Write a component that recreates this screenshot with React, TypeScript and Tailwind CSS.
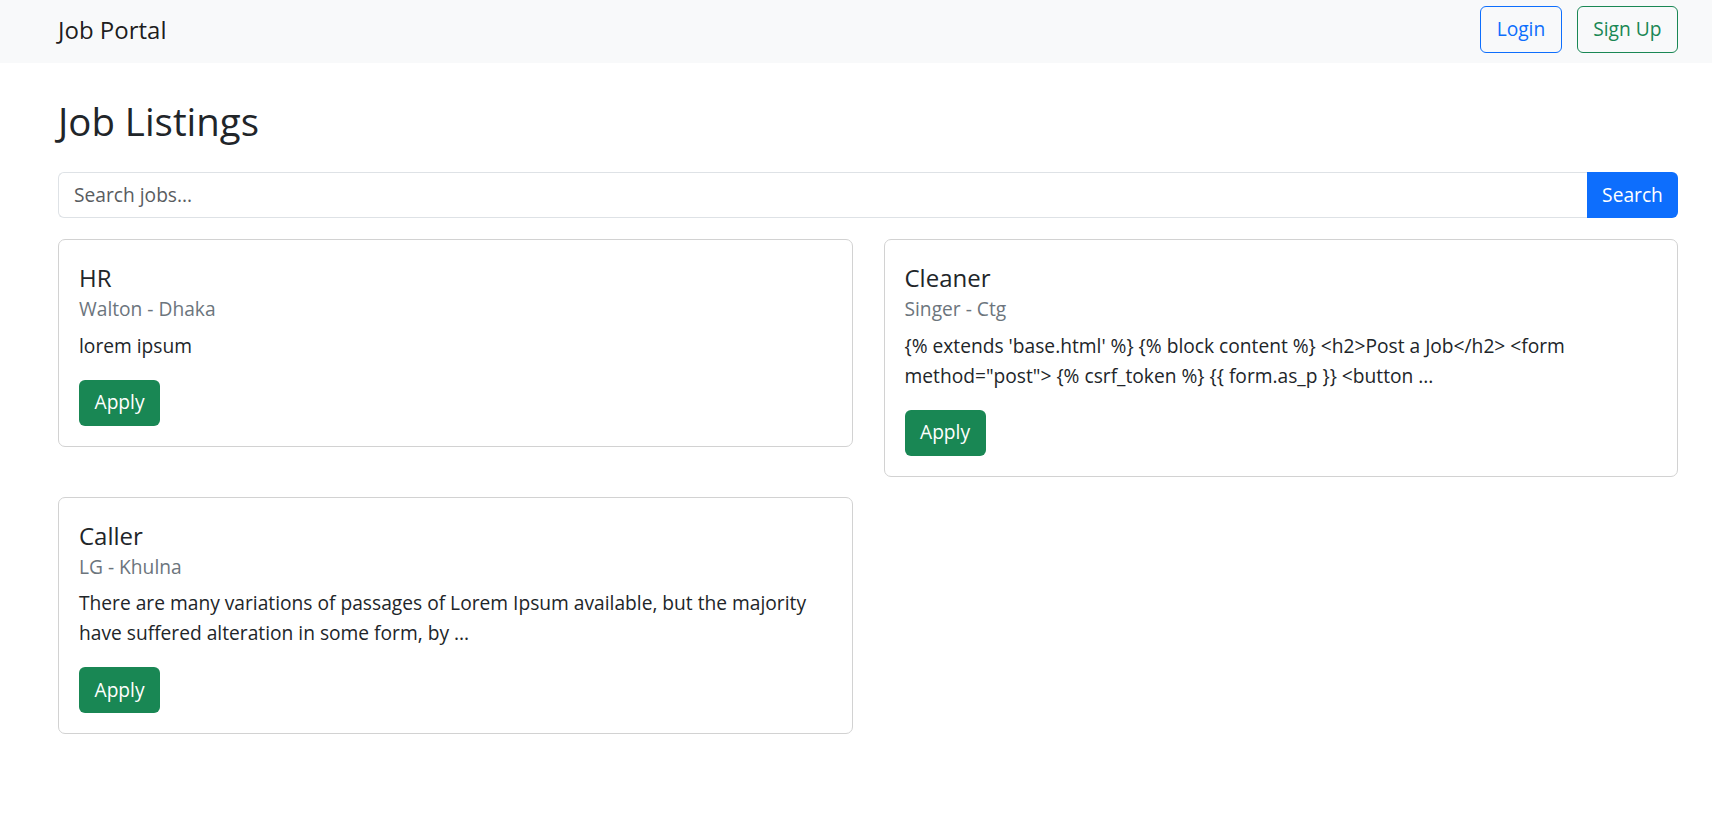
import React from 'react';

const JOBS = [
    {
        title: 'HR',
        company: 'Walton - Dhaka',
        body: 'lorem ipsum',
    },
    {
        title: 'Cleaner',
        company: 'Singer - Ctg',
        body: "{% extends 'base.html' %} {% block content %} <h2>Post a Job</h2> <form method=\"post\"> {% csrf_token %} {{ form.as_p }} <button ...",
    },
    {
        title: 'Caller',
        company: 'LG - Khulna',
        body: 'There are many variations of passages of Lorem Ipsum available, but the majority have suffered alteration in some form, by ...',
    },
];

const JobCard = ({ title, company, body }: { title: string; company: string; body: string }) => {
    return (
        <div className="border border-[#d2d2d2] rounded-[7px] bg-white px-[20px] pt-[20px] pb-[20px]">
            <h5 className="text-[24px] leading-[29px] mt-[3px] mb-[5px]">{title}</h5>
            <h6 className="text-[19.2px] leading-[23px] text-[#6c757d] mb-[10.7px]">{company}</h6>
            <p className="text-[19.2px] leading-[30px] mb-[19px]">{body}</p>
            <button className="h-[46px] px-[15.5px] rounded-[6px] bg-[#198754] text-white text-[19.2px]">
                Apply
            </button>
        </div>
    );
};

export default function App() {
    return (
        <div className="min-h-screen bg-white text-[#212529] font-['Open_Sans',sans-serif]">
            <nav className="bg-[#f8f9fa] h-[63px] pl-[58px] pr-[34px] pb-[4px] flex items-center justify-between">
                <span className="text-[24px] text-black/90">Job Portal</span>
                <div className="flex gap-[15px]">
                    <button className="h-[47px] px-[15.5px] rounded-[6px] border border-[#0d6efd] text-[#0d6efd] text-[19.2px]">
                        Login
                    </button>
                    <button className="h-[47px] px-[15.5px] rounded-[6px] border border-[#198754] text-[#198754] text-[19.2px]">
                        Sign Up
                    </button>
                </div>
            </nav>

            <main className="pl-[58px] pr-[34px]">
                <h2 className="text-[38.4px] leading-[46px] mt-[35px] mb-[28px]">Job Listings</h2>

                <form className="flex h-[46px] mb-[21px]" onSubmit={(e) => e.preventDefault()}>
                    <input
                        type="text"
                        placeholder="Search jobs..."
                        className="flex-1 min-w-0 border border-[#dee2e6] border-r-0 rounded-l-[6px] px-[15px] text-[19.2px] placeholder:text-[#595c5f] outline-none"
                    />
                    <button className="w-[91px] rounded-r-[6px] bg-[#0d6efd] text-white text-[19.2px]">
                        Search
                    </button>
                </form>

                <div className="grid grid-cols-2 gap-x-[31px] gap-y-[20px] items-start">
                    {JOBS.map((job) => (
                        <JobCard key={job.title} {...job} />
                    ))}
                </div>
            </main>
        </div>
    );
}
